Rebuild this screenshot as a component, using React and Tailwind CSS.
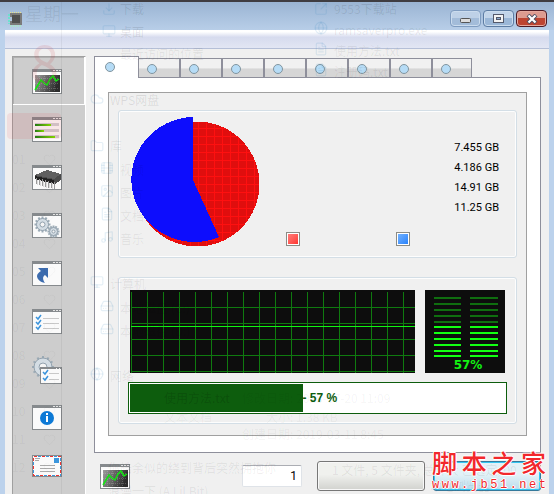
import React from 'react';
import clsx from 'clsx';
import { Cloud, Download, FileText, Film, Folder, Globe, HardDrive, Heart, Image, Monitor, Music, SquareArrowOutUpRight } from 'lucide-react';

const WindowFrame = ({ children, title = true }) => (
  <svg width="30" height="25" viewBox="0 0 30 25" shapeRendering="crispEdges">
    <rect width="30" height="25" fill="#868a8d" />
    <rect x="1" y="3" width="28" height="21" fill="#fafafa" />
    {title && <path d="M21 1h2v1h-2zM24 1h2v1h-2zM27 1h2v1h-2z" fill="#e4e4e4" />}
    {children}
  </svg>
);

const ChartIcon = () => (
  <WindowFrame>
    <defs>
      <linearGradient id="chartBg" x1="0" y1="0" x2="1" y2="0.3">
        <stop offset="0" stopColor="#a4a4a4" />
        <stop offset="0.6" stopColor="#5c5c5c" />
        <stop offset="1" stopColor="#2c2c2c" />
      </linearGradient>
    </defs>
    <rect x="2" y="5" width="26" height="18" fill="url(#chartBg)" stroke="#fff" />
    <path d="M3 9.500h24M3 14.500h24M3 19.500h24M7.500 5v18M12.500 5v18M17.500 5v18M22.500 5v18" stroke="#fff" strokeOpacity="0.2" strokeDasharray="1 1" />
    <path d="M3 21l3-5 3-5 3 3 3 2 3-6 3-3 3 5 3-2" fill="none" stroke="#12e612" strokeWidth="1.500" shapeRendering="auto" />
  </WindowFrame>
);

const BarsIcon = () => (
  <WindowFrame>
    <defs>
      <linearGradient id="barFill">
        <stop offset="0" stopColor="#148214" />
        <stop offset="1" stopColor="#7ce600" />
      </linearGradient>
    </defs>
    {[[7, 16], [13, 9], [19, 20]].map(([y, w]) => (
      <g key={y}>
        <rect x="3" y={y - 1} width="24" height="3" fill="#d0cfd4" />
        <rect x="3" y={y} width={w} height="2" fill="url(#barFill)" />
      </g>
    ))}
  </WindowFrame>
);

const ChipIcon = () => (
  <WindowFrame>
    <path d="M3 10L15 5l14 4v6l-6 4L3 13z" fill="#4b4b4b" />
    <path d="M3 10L15 5l14 4-7 5z" fill="#606060" />
    <path d="M3 11v3l19 5v-4z" fill="#222" />
    <path d="M4.500 13v6M7.500 14v6M10.500 14v7M13.500 15v7M16.500 16v7M19.500 17v6M22.500 17v7" stroke="#999" />
    <path d="M5.500 15v5M8.500 15v6M11.500 16v6M14.500 17v6M17.500 18v5M20.500 18v6" stroke="#ddd" />
  </WindowFrame>
);

const Gear = ({ cx, cy, r }) => (
  <g transform={`translate(${cx} ${cy})`} shapeRendering="auto">
    {[0, 30, 60, 90, 120, 150].map((angle) => (
      <rect key={angle} x="-1" y={-r - 1} width="2" height={r * 2 + 2} fill="#9baab5" transform={`rotate(${angle})`} />
    ))}
    <circle r={r - 1} fill="#d4dde4" stroke="#93a2ae" />
    <circle r={r / 2 - 1} fill="#f5f5f5" stroke="#93a2ae" />
  </g>
);

const GearsIcon = () => (
  <WindowFrame>
    <Gear cx={10.5} cy={11.5} r={7} />
    <Gear cx={21.5} cy={18.5} r={5} />
  </WindowFrame>
);

const ShortcutIcon = () => (
  <WindowFrame>
    <path d="M6 7h10v10l-3-3c-3 2-2 5 0 8-5-1-8-4-8-7 0-2 2-4 4-5z" fill="#3d6cae" shapeRendering="auto" />
  </WindowFrame>
);

const Checks = ({ rows, x, lineX, lineEnd }) => rows.map((y) => (
  <g key={y}>
    <path d={`M${x} ${y}l2 2 3-4`} fill="none" stroke="#3a93db" strokeWidth="1.500" shapeRendering="auto" />
    <path d={`M${lineX} ${y + 1.5}H${lineEnd}`} stroke="#c9c9c9" />
  </g>
));

const ListIcon = () => (
  <WindowFrame>
    <Checks rows={[8, 13, 18]} x={4} lineX={11} lineEnd={27} />
  </WindowFrame>
);

const GearListIcon = () => (
  <svg width="30" height="28" viewBox="0 0 30 28" shapeRendering="crispEdges">
    <Gear cx={11} cy={11} r={10} />
    <rect x="8" y="11" width="22" height="17" fill="#868a8d" />
    <rect x="9" y="13" width="20" height="14" fill="#fafafa" />
    <path d="M24 12h1M27 12h1" stroke="#eee" />
    <Checks rows={[16, 22]} x={11} lineX={17} lineEnd={27} />
  </svg>
);

const InfoIcon = () => (
  <WindowFrame>
    <circle cx="15" cy="13" r="7" fill="#0e7ad6" shapeRendering="auto" />
    <path d="M14 8h2v2h-2zM14 11h2v6h-2z" fill="#fff" />
  </WindowFrame>
);

const MailIcon = () => (
  <svg width="30" height="22" viewBox="0 0 30 22" shapeRendering="crispEdges">
    <rect width="30" height="22" fill="#868a8d" />
    <rect x="1" y="1" width="28" height="20" fill="#fafafa" />
    <rect x="1.500" y="1.500" width="27" height="19" fill="none" stroke="#e33" strokeDasharray="3 5" />
    <rect x="1.500" y="1.500" width="27" height="19" fill="none" stroke="#3b96dd" strokeDasharray="3 5" strokeDashoffset="-4" />
    <rect x="22" y="3" width="5" height="5" fill="#3b96dd" />
    <path d="M3 3.500h5M3 5.500h4M8 10.500h15M8 13.500h15M8 16.500h15" stroke="#aaa" />
  </svg>
);

const sections = [
  { name: 'Overview', icon: ChartIcon },
  { name: 'Usage', icon: BarsIcon },
  { name: 'Memory', icon: ChipIcon },
  { name: 'Settings', icon: GearsIcon },
  { name: 'Shortcuts', icon: ShortcutIcon },
  { name: 'Tasks', icon: ListIcon },
  { name: 'Task options', icon: GearListIcon },
  { name: 'About', icon: InfoIcon },
  { name: 'Contact', icon: MailIcon },
];

const Sidebar = () => (
  <nav className="w-[74px] shrink-0 border-l border-t border-r border-l-[#a0a0a0] border-t-[#a0a0a0] border-r-white bg-[#cdcdcd]">
    {sections.map(({ name, icon: Icon }, index) => (
      <button
        key={name}
        aria-label={name}
        className={clsx(
          'flex h-12 w-full items-center justify-center pr-1 pt-0.5 border-r border-b',
          index === 0 ? 'border-white shadow-[inset_1px_1px_0_#b0b0b0]' : 'border-transparent'
        )}
      >
        <Icon />
      </button>
    ))}
  </nav>
);

const TitleBar = () => (
  <header className="flex h-7 items-start justify-between bg-linear-to-b from-[#9ab4d3] to-[#b8cee8] pl-2 pr-[7px] pt-2">
    <svg width="16" height="16" viewBox="0 0 16 16" className="mt-px" shapeRendering="crispEdges">
      <path d="M2 1.500h12" stroke="#e8e28a" strokeWidth="2" strokeDasharray="1 1" />
      <path d="M2 14.500h12" stroke="#a9e6c6" strokeWidth="2" strokeDasharray="1 1" />
      <path d="M1 3v10" stroke="#6ee0cf" strokeWidth="2" strokeDasharray="2 1" />
      <path d="M2 2h12v12H2v-4h2V6H2z" fill="#7b7b7b" />
      <path d="M4 4h8v8H4z" fill="#505050" />
    </svg>
    <div className="flex gap-0.5">
      <button aria-label="Minimize" className="flex h-[17px] w-[31px] items-center justify-center rounded-sm border border-[#7f9cc0] bg-linear-to-b from-[#bed1e7] from-50% to-[#a3bcd9] to-50% shadow-[inset_0_0_0_1px_#cbdcee]">
        <svg width="11" height="5" className="mt-1"><rect x="0.500" y="0.500" width="10" height="4" rx="1" fill="#ddd" stroke="#555" /></svg>
      </button>
      <button aria-label="Maximize" className="flex h-[17px] w-[31px] items-center justify-center rounded-sm border border-[#5d7ca3] bg-linear-to-b from-[#c2d4e9] from-50% to-[#9bb7d7] to-50% shadow-[inset_0_0_0_1px_#cbdcee]">
        <svg width="11" height="9" shapeRendering="crispEdges">
          <rect x="0.500" y="0.500" width="10" height="8" fill="#f3f3f3" stroke="#54596b" />
          <rect x="3.500" y="3.500" width="4" height="2" fill="#8caacd" stroke="#54596b" />
        </svg>
      </button>
      <button aria-label="Close" className="flex h-[17px] w-[31px] items-center justify-center rounded-sm border border-[#4d1a24] bg-linear-to-b from-[#dd9b90] from-50% to-[#bd4431] to-50% shadow-[inset_0_0_0_1px_#e5a89d]">
        <svg width="12" height="10" viewBox="0 0 12 10">
          <path d="M2 1l8 8M10 1L2 9" stroke="#4c4d60" strokeWidth="4" />
          <path d="M2.500 1.500l7 7M9.500 1.500l-7 7" stroke="#fff" strokeWidth="2.200" />
        </svg>
      </button>
    </div>
  </header>
);

const tabs = ['Memory', 'Processes', 'Startup', 'Disk', 'Network', 'Cache', 'Log', 'Options', 'Help'];

const Tabs = () => (
  <div role="tablist" className="flex h-[21px] items-end">
    {tabs.map((name, index) => (
      <button
        key={name}
        role="tab"
        aria-label={name}
        aria-selected={index === 0}
        className={clsx(
          'flex shrink-0 border-t border-[#8e8f9b]',
          index === 0 && 'relative -mb-px h-[22px] w-[45px] border-x bg-white pl-2.5 pt-[5px]',
          index > 0 && 'h-[19px] bg-linear-to-b from-[#f1f1f1] from-50% to-[#d6d6d6] to-55% pl-2 pt-[5px]',
          index > 0 && index < 8 && 'w-[42px] border-r-2',
          index === 8 && 'w-[39px] border-r'
        )}
      >
        <span className="size-2.5 rounded-full border border-[#82959f] bg-[#b6dcf6]" />
      </button>
    ))}
  </div>
);

const Group = ({ className, children }) => (
  <section className={clsx('rounded-[3px] border border-[#d3dee6] shadow-[inset_0_0_0_1px_#fdfdfd]', className)}>
    {children}
  </section>
);

const amounts = ['7.455 GB', '4.186 GB', '14.91 GB', '11.25 GB'];

const PieChart = () => (
  <svg width="130" height="130" viewBox="0 0 130 130" className="shrink-0" shapeRendering="crispEdges">
    <defs>
      <pattern id="redGrid" x="4" y="3" width="8" height="8" patternUnits="userSpaceOnUse">
        <rect width="8" height="8" fill="#e00e0e" />
        <path d="M0 0.500h8M0.500 0v8" stroke="#ff1010" />
      </pattern>
    </defs>
    <circle cx="67" cy="67" r="62.500" fill="url(#redGrid)" />
    <path d="M63 63V0A63 62.500 0 1 0 89 120z" fill="#0d0dfd" />
  </svg>
);

const Summary = () => (
  <Group className="flex h-[148px] pl-[11px] pr-[17px] pt-1.5">
    <PieChart />
    <div className="ml-[26px] flex-1 pt-[21px]">
      <ul className="text-right font-['Roboto',sans-serif] text-[11px] leading-5 text-black">
        {amounts.map((amount) => <li key={amount}>{amount}</li>)}
      </ul>
      <div className="mt-3.5 flex gap-24">
        <span className="size-3.5 border border-[#8b8b85] bg-linear-to-br from-[#ff8080] to-[#f22] shadow-[inset_0_0_0_1px_#fff]" />
        <span className="size-3.5 border border-[#8b8b85] bg-linear-to-br from-[#77b5ff] to-[#1c7dfa] shadow-[inset_0_0_0_1px_#fff]" />
      </div>
    </div>
  </Group>
);

const HistoryChart = () => (
  <svg className="h-[83px] min-w-0 flex-1 bg-[#0d0d0d]" shapeRendering="crispEdges">
    <defs>
      <pattern id="greenGrid" x="1" y="1" width="16" height="16" patternUnits="userSpaceOnUse">
        <path d="M0 0.500h16M0.500 0v16" stroke="#0f7a0f" />
      </pattern>
    </defs>
    <rect x="1" y="2" width="100%" height="81" fill="url(#greenGrid)" />
    <line x1="1" x2="100%" y1="36.500" y2="36.500" stroke="#12f412" />
  </svg>
);

const meterRows = [7, 13, 19, 25, 31, 36, 42, 48, 54, 60, 65];

const Meter = () => (
  <svg width="80" height="83" className="shrink-0 bg-[#0d0d0d]">
    {meterRows.map((y, index) => (
      <g key={y} fill={index < 5 ? '#0f6e0f' : '#12ff12'}>
        <rect x="9" y={y} width="27" height="2" />
        <rect x="45" y={y} width="28" height="2" />
      </g>
    ))}
    <text x="43" y="79" textAnchor="middle" className="fill-[#12f412] font-['DejaVu_Sans',sans-serif] text-[12px] font-bold">57%</text>
  </svg>
);

const Usage = () => (
  <Group className="h-[147px] px-[9px] pt-3">
    <div className="flex gap-2.5 px-0.5">
      <HistoryChart />
      <Meter />
    </div>
    <div role="progressbar" aria-valuenow={57} className="mt-[9px] flex h-8 items-center border border-[#0d5d0d] bg-white p-px">
      <div className="h-full w-[46%] bg-[#0d5d0d]" />
      <span className="font-['Liberation_Sans',sans-serif] text-[12px] font-bold text-[#0d5d0d]">- 57 %</span>
    </div>
  </Group>
);

// faint labels that shine through the glass of the window
const ghosts = [
  ['left-[25px] top-0 text-[18px]', '星期一'],
  ['left-[30px] top-[22px] text-[52px] text-red-700/10', '8'],
  ['left-[120px] top-0 text-black/10', '下载'],
  ['left-[120px] top-[23px] text-black/10', '桌面'],
  ['left-[120px] top-[45px]', '最近访问的位置'],
  ['left-[110px] top-[91px] text-black/10', 'WPS网盘'],
  ['left-[110px] top-[137px]', '库'],
  ['left-[120px] top-[161px]', '视频'],
  ['left-[120px] top-[184px]', '图片'],
  ['left-[120px] top-[207px]', '文档'],
  ['left-[120px] top-[230px]', '音乐'],
  ['left-[110px] top-[275px]', '计算机'],
  ['left-[120px] top-[299px]', '本地磁盘 (C:)'],
  ['left-[120px] top-[322px]', '本地磁盘 (D:)'],
  ['left-[110px] top-[367px]', '网络'],
  ['left-[164px] top-[389px] text-black/15', '使用方法.txt'],
  ['left-[242px] top-[389px] text-black/5', '修改日期: 2018-07-20 11:09'],
  ['left-[164px] top-[408px] text-black/5', '文本文档'],
  ['left-[266px] top-[408px] text-black/5', '大小: 1.38 KB'],
  ['left-[242px] top-[425px] text-black/5', '创建日期: 2019-03-11 8:45'],
  ['left-[334px] top-0 text-black/10', '9553下载站'],
  ['left-[334px] top-[21px]', 'ramsaverpro.exe'],
  ['left-[334px] top-[42px]', '使用方法.txt'],
  ['left-[334px] top-[63px]', '注册码.txt'],
  ['left-[108px] top-[459px]', '你皓余似的绕到背后突然拥抱你'],
  ['left-[108px] top-[482px]', '浪漫一下 (A Lil Bit)'],
  ['left-[332px] top-[461px]', '1 文件, 5 文件夹, 总计大 已选定, 00'],
  ['left-[430px] top-[477px]', '本地浏览器'],
];

const ghostIcons = [
  ['left-[102px] top-[2px]', Download],
  ['left-[102px] top-[24px]', Monitor],
  ['left-[90px] top-[92px]', Cloud],
  ['left-[90px] top-[139px]', Folder],
  ['left-[100px] top-[161px]', Film],
  ['left-[100px] top-[184px]', Image],
  ['left-[100px] top-[207px]', FileText],
  ['left-[100px] top-[230px]', Music],
  ['left-[90px] top-[275px]', Monitor],
  ['left-[100px] top-[299px]', HardDrive],
  ['left-[100px] top-[322px]', HardDrive],
  ['left-[90px] top-[367px]', Globe],
  ['left-[314px] top-[2px]', SquareArrowOutUpRight],
  ['left-[314px] top-[21px]', Globe],
  ['left-[314px] top-[42px]', FileText],
  ['left-[314px] top-[63px]', FileText],
];

const ranks = ['01', '02', '03', '04', '05', '06', '07', '08', '09', '10', '11', '12'];

const Ghosts = () => (
  <div aria-hidden="true" className="pointer-events-none absolute inset-0 -top-0.5 overflow-hidden whitespace-nowrap font-['Noto_Sans_CJK_SC',sans-serif] text-[12px] text-black/8">
    <div className="absolute inset-y-0 left-0 w-[62px] border-r border-black/5" />
    {ghosts.map(([place, text]) => (
      <span key={place} className={clsx('absolute', place)}>{text}</span>
    ))}
    {ghostIcons.map(([place, Icon]) => (
      <Icon key={place} size={14} className={clsx('absolute text-sky-700/10', place)} />
    ))}
    <div className="absolute left-[7px] top-[113px] h-[26px] w-[54px] rounded-sm bg-red-600/8" />
    <ul className="absolute left-3 top-[145px] leading-7 text-black/5">
      {ranks.map((rank) => (
        <li key={rank} className="flex items-center gap-[18px]">
          {rank}
          <Heart size={13} strokeWidth={1} />
        </li>
      ))}
    </ul>
  </div>
);

const SiteMark = () => (
  <div className="absolute bottom-0.5 right-2 w-[114px] text-[#f2282c] [text-shadow:-1px_0_#fff,1px_0_#fff,0_-1px_#fff,0_1px_#fff]">
    <div className="flex justify-between pb-0.5 font-['Noto_Sans_CJK_SC',sans-serif] text-[25px] font-medium leading-7">
      <span>脚</span><span>本</span><span>之</span><span>家</span>
    </div>
    <div className="flex justify-between font-['Liberation_Mono',monospace] text-[12px] leading-3.5">
      {'www.jb51.net'.split('').map((letter, index) => <span key={index}>{letter}</span>)}
    </div>
  </div>
);

const App = () => {
  return (
    <div className="relative flex min-h-screen flex-col overflow-hidden border-t-2 border-[#3f3d42] bg-[#bcd2ec]">
      <TitleBar />
      <div className="mx-[5px] flex flex-1 flex-col bg-[#f0f0f0]">
        <div className="h-[19px] shrink-0 border-b border-[#b5bfd7] bg-linear-to-b from-white from-10% via-[#d6dbee] via-40% to-[#e2e6f3]" />
        <div className="flex flex-1 gap-2 pl-[7px] pr-2 pt-[7px]">
          <Sidebar />
          <main className="min-w-0 flex-1">
            <Tabs />
            <div className="border border-[#8e8f9b] bg-white px-[13px] pb-4 pt-3.5">
              <div className="flex flex-col gap-[19px] border border-[#a0a0a0] bg-[#f0f0f0] px-[9px] pb-[11px] pt-[17px]">
                <Summary />
                <Usage />
              </div>
            </div>
            <div className="flex items-center pl-1.5 pt-2">
              <ChartIcon />
              <input
                aria-label="Interval"
                defaultValue="1"
                className="ml-auto h-[22px] w-[60px] rounded-xs border border-[#dfe3e8] border-t-[#abadb3] bg-white pr-1 text-right font-['Roboto',sans-serif] text-[12px] text-black"
              />
              <button aria-label="Apply" className="ml-[15px] h-[30px] w-[108px] rounded-[3px] border border-[#777] bg-linear-to-b from-[#f0f1ee] from-45% to-[#d1d2ce] shadow-[inset_0_0_0_1px_#f8f8f8]" />
              <button aria-label="Optimize" className="ml-2 h-[30px] w-[108px] rounded-[3px] border border-[#35799b] bg-linear-to-b from-[#e2f1f7] from-45% to-[#b9dcec] shadow-[inset_0_0_0_1px_#35c6f2]" />
            </div>
          </main>
        </div>
      </div>
      <Ghosts />
      <SiteMark />
    </div>
  );
};

export default App;
